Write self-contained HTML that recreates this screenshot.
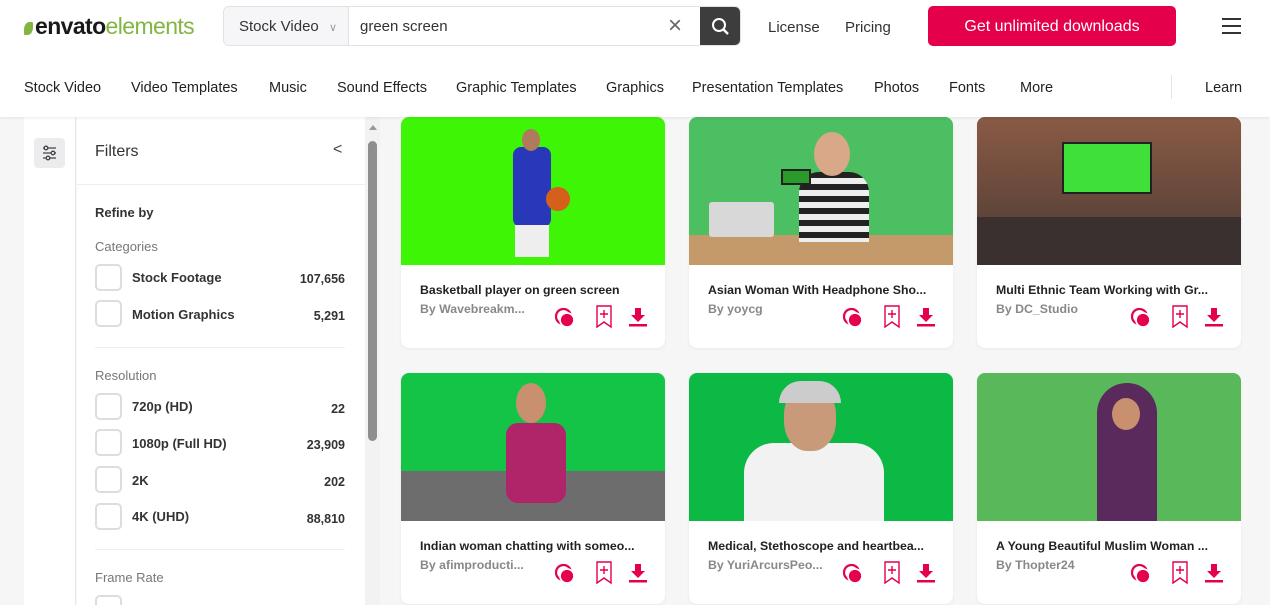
<!DOCTYPE html>
<html style="width:1270px;height:605px;overflow:hidden"><head><meta charset="utf-8"><style>
*{box-sizing:border-box;margin:0;padding:0}
body{width:1270px;height:605px;overflow:hidden;background:#f6f6f6;font-family:"Liberation Sans",sans-serif;color:#191919;position:relative}
.hdr{position:absolute;left:0;top:0;width:1270px;height:117px;background:#fff;box-shadow:0 1px 3px rgba(0,0,0,.08);z-index:2}
.abs{position:absolute}
.nav{position:absolute;top:80px;font-size:14.5px;color:#222}
.side{position:absolute;left:24px;top:117px;width:52px;height:488px;background:#fff;border-right:1px solid #e8e8e8}
.filt{position:absolute;left:77px;top:117px;width:288px;height:488px;background:#fff;overflow:hidden}
.cb{position:absolute;left:18px;width:27px;height:27px;border:2px solid #ddd;border-radius:5px}
.lbl{position:absolute;left:55px;font-size:13px;font-weight:bold;color:#333}
.num{position:absolute;right:20px;font-size:12.5px;font-weight:bold;color:#333}
.sec{position:absolute;left:18px;font-size:13px;color:#777}
.card{position:absolute;width:264px;height:231px;background:#fff;border-radius:8px;overflow:hidden;box-shadow:0 1px 3px rgba(0,0,0,.06)}
.img{height:148px;position:relative;overflow:hidden}
.t{position:absolute;left:19px;top:166px;font-size:12.3px;font-weight:bold;color:#222;white-space:nowrap}
.a{position:absolute;left:19px;top:185px;font-size:12.3px;font-weight:bold;color:#888}
.ic{position:absolute;top:190px}
</style></head><body>
<div class="hdr">
 <div class="abs" style="left:24px;top:13px;font-size:23px;letter-spacing:-0.6px"><span style="display:inline-block;width:9px;height:13px;background:#82b541;border-radius:60% 10% 60% 10%;margin-right:2px;vertical-align:-1px"></span><span style="color:#191919;font-weight:bold">envato</span><span style="color:#82b541">elements</span></div>
 <div class="abs" style="left:223px;top:6px;width:518px;height:40px;border:1px solid #e2e2e2;border-radius:6px;background:#fff;overflow:hidden">
  <div class="abs" style="left:0;top:0;width:125px;height:40px;background:#f6f6f8;border-right:1px solid #e2e2e2;font-size:15px;padding:11px 0 0 15px;color:#333">Stock Video <span style="color:#999;font-size:11px;margin-left:6px">&#8744;</span></div>
  <div class="abs" style="left:136px;top:11px;font-size:15px;color:#333">green screen</div>
  <div class="abs" style="left:444px;top:5px;font-size:24px;color:#666">×</div>
  <div class="abs" style="left:476px;top:-1px;width:42px;height:42px;background:#3d3d3d;border-radius:0 6px 6px 0"><svg width="42" height="42"><circle cx="19" cy="19" r="6" stroke="#fff" stroke-width="2" fill="none"/><path d="M23.5 23.5L28 28" stroke="#fff" stroke-width="2.4"/></svg></div>
 </div>
 <div class="abs" style="left:768px;top:19px;font-size:15px;color:#333">License</div>
 <div class="abs" style="left:845px;top:19px;font-size:15px;color:#333">Pricing</div>
 <div class="abs" style="left:928px;top:6px;width:248px;height:40px;background:#e4004a;border-radius:5px;color:#fff;font-size:16px;text-align:center;line-height:42px">Get unlimited downloads</div>
 <div class="abs" style="left:1222px;top:18px;width:19px"><div style="height:2px;background:#333;margin-bottom:5px"></div><div style="height:2px;background:#333;margin-bottom:5px"></div><div style="height:2px;background:#333"></div></div>
 <div class="nav" style="left:24px">Stock Video</div><div class="nav" style="left:131px">Video Templates</div><div class="nav" style="left:269px">Music</div><div class="nav" style="left:337px">Sound Effects</div><div class="nav" style="left:456px">Graphic Templates</div><div class="nav" style="left:606px">Graphics</div><div class="nav" style="left:692px">Presentation Templates</div><div class="nav" style="left:874px">Photos</div><div class="nav" style="left:949px">Fonts</div><div class="nav" style="left:1020px">More</div>
 <div class="abs" style="left:1171px;top:75px;width:1px;height:24px;background:#e5e5e5"></div>
 <div class="nav" style="left:1205px">Learn</div>
</div>
<div class="side"><div class="abs" style="left:10px;top:21px;width:31px;height:30px;background:#ececee;border-radius:4px"><svg width="31" height="30"><g stroke="#444" stroke-width="1.3" fill="none"><path d="M9 10h13M9 15h13M9 20h13"/><circle cx="12" cy="10" r="1.8" fill="#ececee"/><circle cx="19" cy="15" r="1.8" fill="#ececee"/><circle cx="14" cy="20" r="1.8" fill="#ececee"/></g></svg></div></div>
<div class="filt">
 <div class="abs" style="left:18px;top:26px;font-size:16px;color:#333">Filters</div>
 <div class="abs" style="left:256px;top:24px;font-size:16px;color:#444">&lt;</div>
 <div class="abs" style="left:0;top:67px;width:288px;height:1px;background:#eee"></div>
 <div class="abs" style="left:18px;top:88px;font-size:13px;font-weight:bold;color:#333">Refine by</div>
 <div class="sec" style="top:122px">Categories</div>
 <div class="cb" style="top:147px"></div><div class="lbl" style="top:153px">Stock Footage</div><div class="num" style="top:155px">107,656</div>
 <div class="cb" style="top:183px"></div><div class="lbl" style="top:190px">Motion Graphics</div><div class="num" style="top:192px">5,291</div>
 <div class="abs" style="left:18px;top:230px;width:250px;height:1px;background:#eee"></div>
 <div class="sec" style="top:251px">Resolution</div>
 <div class="cb" style="top:276px"></div><div class="lbl" style="top:282px">720p (HD)</div><div class="num" style="top:285px">22</div>
 <div class="cb" style="top:312px"></div><div class="lbl" style="top:319px">1080p (Full HD)</div><div class="num" style="top:321px">23,909</div>
 <div class="cb" style="top:349px"></div><div class="lbl" style="top:356px">2K</div><div class="num" style="top:358px">202</div>
 <div class="cb" style="top:386px"></div><div class="lbl" style="top:392px">4K (UHD)</div><div class="num" style="top:395px">88,810</div>
 <div class="abs" style="left:18px;top:432px;width:250px;height:1px;background:#eee"></div>
 <div class="sec" style="top:453px">Frame Rate</div>
 <div class="cb" style="top:478px"></div>
</div>
<div class="abs" style="left:365px;top:117px;width:15px;height:488px;background:#f2f2f2"><div class="abs" style="left:4px;top:8px;width:0;height:0;border-left:4px solid transparent;border-right:4px solid transparent;border-bottom:5px solid #999"></div><div class="abs" style="left:3px;top:24px;width:9px;height:300px;background:#8e8e8e;border-radius:5px"></div></div>

<div class="card" style="left:401px;top:117px"><div class="img" style="background:#3df505"><div class="abs" style="left:112px;top:30px;width:38px;height:80px;background:#2838b8;border-radius:8px"></div><div class="abs" style="left:121px;top:12px;width:18px;height:22px;background:#b07a5c;border-radius:50%"></div><div class="abs" style="left:114px;top:108px;width:34px;height:32px;background:#eee"></div><div class="abs" style="left:145px;top:70px;width:24px;height:24px;background:#d5601c;border-radius:50%"></div></div><div class="t">Basketball player on green screen</div><div class="a">By Wavebreakm...</div></div>
<div class="card" style="left:689px;top:117px"><div class="img" style="background:#4cbf62"><div class="abs" style="left:0;top:118px;width:264px;height:30px;background:#c59a6a"></div><div class="abs" style="left:20px;top:85px;width:65px;height:35px;background:#d8d8d8;border-radius:3px"></div><div class="abs" style="left:110px;top:55px;width:70px;height:70px;background:repeating-linear-gradient(180deg,#222 0 6px,#eee 6px 12px);border-radius:20px 20px 0 0"></div><div class="abs" style="left:125px;top:15px;width:36px;height:44px;background:#d8a888;border-radius:50%"></div><div class="abs" style="left:92px;top:52px;width:30px;height:16px;background:#2a9a2a;border:2px solid #222"></div></div><div class="t">Asian Woman With Headphone Sho...</div><div class="a">By yoycg</div></div>
<div class="card" style="left:977px;top:117px"><div class="img" style="background:#6a4a3a"><div class="abs" style="left:0;top:0;width:264px;height:148px;background:linear-gradient(180deg,#8a5a45,#4a3a34)"></div><div class="abs" style="left:85px;top:25px;width:90px;height:52px;background:#3fe03a;border:2px solid #222"></div><div class="abs" style="left:0;top:100px;width:264px;height:48px;background:#3a3030"></div></div><div class="t">Multi Ethnic Team Working with Gr...</div><div class="a">By DC_Studio</div></div>
<div class="card" style="left:401px;top:373px"><div class="img" style="background:#13c447"><div class="abs" style="left:0;top:98px;width:264px;height:50px;background:#6d6d6d"></div><div class="abs" style="left:105px;top:50px;width:60px;height:80px;background:#b0246a;border-radius:12px"></div><div class="abs" style="left:115px;top:10px;width:30px;height:40px;background:#c8906e;border-radius:50%"></div></div><div class="t">Indian woman chatting with someo...</div><div class="a">By afimproducti...</div></div>
<div class="card" style="left:689px;top:373px"><div class="img" style="background:#0cb944"><div class="abs" style="left:55px;top:70px;width:140px;height:80px;background:#f2f2f2;border-radius:30px 30px 0 0"></div><div class="abs" style="left:95px;top:12px;width:52px;height:66px;background:#c99a7a;border-radius:45%"></div><div class="abs" style="left:90px;top:8px;width:62px;height:22px;background:#ccc;border-radius:30px 30px 0 0"></div></div><div class="t">Medical, Stethoscope and heartbea...</div><div class="a">By YuriArcursPeo...</div></div>
<div class="card" style="left:977px;top:373px"><div class="img" style="background:#58b85a"><div class="abs" style="left:120px;top:10px;width:60px;height:138px;background:#5a2a5c;border-radius:30px 30px 0 0"></div><div class="abs" style="left:135px;top:25px;width:28px;height:32px;background:#c8906e;border-radius:50%"></div></div><div class="t">A Young Beautiful Muslim Woman ...</div><div class="a">By Thopter24</div></div>
<script>
var ic='<svg class="ic" style="left:152px;top:189px" width="26" height="26" viewBox="0 0 26 26"><circle cx="10.5" cy="10.5" r="7.5" fill="none" stroke="#e4004a" stroke-width="2.2"/><circle cx="14" cy="14" r="7" fill="#e4004a" stroke="#fff" stroke-width="1.8"/></svg><svg class="ic" style="left:194px;top:188px" width="18" height="24" viewBox="0 0 18 24"><path d="M2 1h14v21l-7-5-7 5z" fill="none" stroke="#e4004a" stroke-width="1.4"/><path d="M9 5v8M5 9h8" stroke="#e4004a" stroke-width="1.4"/></svg><svg class="ic" style="left:227px;top:188px" width="20" height="24" viewBox="0 0 20 24"><path d="M7 3h6v7h4l-7 7-7-7h4z" fill="#e4004a"/><rect x="1" y="19" width="18" height="2.5" fill="#e4004a"/></svg>';
document.querySelectorAll('.card').forEach(function(c){c.insertAdjacentHTML('beforeend',ic)});
</script>
</body></html>
